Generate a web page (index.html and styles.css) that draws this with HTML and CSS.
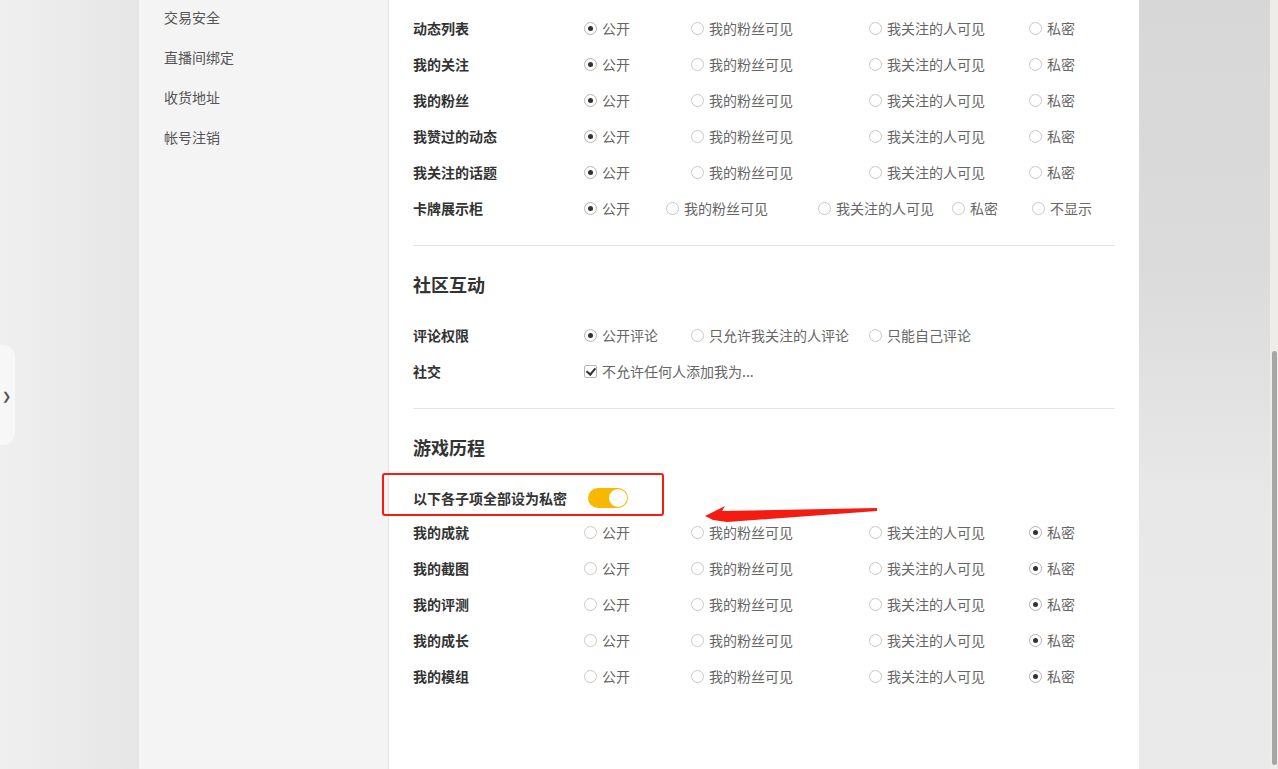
FILE: index.html
```html
<!DOCTYPE html>
<html lang="zh-CN">
<head>
    <meta charset="UTF-8">
    <meta name="viewport" content="width=device-width, initial-scale=1.0">
    <title>隐私设置</title>
    <link rel="stylesheet" href="styles.css">
</head>
<body>
    <div class="page">
        <div class="gutter-left"></div>

        <aside class="sidebar">
            <ul class="nav-list">
                <li class="nav-item">交易安全</li>
                <li class="nav-item">直播间绑定</li>
                <li class="nav-item">收货地址</li>
                <li class="nav-item">帐号注销</li>
            </ul>
        </aside>

        <main class="panel">
            <!-- 个人主页 -->
            <section class="group">
                <div class="row">
                    <div class="row-label">动态列表</div>
                    <div class="options opts-std">
                        <span class="opt"><i class="radio checked"></i>公开</span>
                        <span class="opt"><i class="radio"></i>我的粉丝可见</span>
                        <span class="opt"><i class="radio"></i>我关注的人可见</span>
                        <span class="opt"><i class="radio"></i>私密</span>
                    </div>
                </div>
                <div class="row">
                    <div class="row-label">我的关注</div>
                    <div class="options opts-std">
                        <span class="opt"><i class="radio checked"></i>公开</span>
                        <span class="opt"><i class="radio"></i>我的粉丝可见</span>
                        <span class="opt"><i class="radio"></i>我关注的人可见</span>
                        <span class="opt"><i class="radio"></i>私密</span>
                    </div>
                </div>
                <div class="row">
                    <div class="row-label">我的粉丝</div>
                    <div class="options opts-std">
                        <span class="opt"><i class="radio checked"></i>公开</span>
                        <span class="opt"><i class="radio"></i>我的粉丝可见</span>
                        <span class="opt"><i class="radio"></i>我关注的人可见</span>
                        <span class="opt"><i class="radio"></i>私密</span>
                    </div>
                </div>
                <div class="row">
                    <div class="row-label">我赞过的动态</div>
                    <div class="options opts-std">
                        <span class="opt"><i class="radio checked"></i>公开</span>
                        <span class="opt"><i class="radio"></i>我的粉丝可见</span>
                        <span class="opt"><i class="radio"></i>我关注的人可见</span>
                        <span class="opt"><i class="radio"></i>私密</span>
                    </div>
                </div>
                <div class="row">
                    <div class="row-label">我关注的话题</div>
                    <div class="options opts-std">
                        <span class="opt"><i class="radio checked"></i>公开</span>
                        <span class="opt"><i class="radio"></i>我的粉丝可见</span>
                        <span class="opt"><i class="radio"></i>我关注的人可见</span>
                        <span class="opt"><i class="radio"></i>私密</span>
                    </div>
                </div>
                <div class="row">
                    <div class="row-label">卡牌展示柜</div>
                    <div class="options opts-card">
                        <span class="opt"><i class="radio checked"></i>公开</span>
                        <span class="opt"><i class="radio"></i>我的粉丝可见</span>
                        <span class="opt"><i class="radio"></i>我关注的人可见</span>
                        <span class="opt"><i class="radio"></i>私密</span>
                        <span class="opt"><i class="radio"></i>不显示</span>
                    </div>
                </div>
            </section>

            <section class="group">
                <h2 class="group-title">社区互动</h2>
                <div class="row">
                    <div class="row-label">评论权限</div>
                    <div class="options opts-std">
                        <span class="opt"><i class="radio checked"></i>公开评论</span>
                        <span class="opt"><i class="radio"></i>只允许我关注的人评论</span>
                        <span class="opt"><i class="radio"></i>只能自己评论</span>
                    </div>
                </div>
                <div class="row">
                    <div class="row-label">社交</div>
                    <div class="options">
                        <span class="opt"><i class="checkbox checked"></i>不允许任何人添加我为...</span>
                    </div>
                </div>
            </section>

            <section class="group group-last">
                <h2 class="group-title">游戏历程</h2>
                <div class="row row-toggle">
                    <div class="toggle-label">以下各子项全部设为私密</div>
                    <span class="switch on"><i class="switch-knob"></i></span>
                    <span class="mark-box"></span>
                    <svg class="mark-arrow" width="180" height="24" viewBox="0 0 180 24">
                        <polygon points="1,11 21,1 18,6 173,3 173,6 23,17 9,15" fill="#f41c12"/>
                    </svg>
                </div>
                <div class="row">
                    <div class="row-label">我的成就</div>
                    <div class="options opts-std">
                        <span class="opt"><i class="radio"></i>公开</span>
                        <span class="opt"><i class="radio"></i>我的粉丝可见</span>
                        <span class="opt"><i class="radio"></i>我关注的人可见</span>
                        <span class="opt"><i class="radio checked"></i>私密</span>
                    </div>
                </div>
                <div class="row">
                    <div class="row-label">我的截图</div>
                    <div class="options opts-std">
                        <span class="opt"><i class="radio"></i>公开</span>
                        <span class="opt"><i class="radio"></i>我的粉丝可见</span>
                        <span class="opt"><i class="radio"></i>我关注的人可见</span>
                        <span class="opt"><i class="radio checked"></i>私密</span>
                    </div>
                </div>
                <div class="row">
                    <div class="row-label">我的评测</div>
                    <div class="options opts-std">
                        <span class="opt"><i class="radio"></i>公开</span>
                        <span class="opt"><i class="radio"></i>我的粉丝可见</span>
                        <span class="opt"><i class="radio"></i>我关注的人可见</span>
                        <span class="opt"><i class="radio checked"></i>私密</span>
                    </div>
                </div>
                <div class="row">
                    <div class="row-label">我的成长</div>
                    <div class="options opts-std">
                        <span class="opt"><i class="radio"></i>公开</span>
                        <span class="opt"><i class="radio"></i>我的粉丝可见</span>
                        <span class="opt"><i class="radio"></i>我关注的人可见</span>
                        <span class="opt"><i class="radio checked"></i>私密</span>
                    </div>
                </div>
                <div class="row">
                    <div class="row-label">我的模组</div>
                    <div class="options opts-std">
                        <span class="opt"><i class="radio"></i>公开</span>
                        <span class="opt"><i class="radio"></i>我的粉丝可见</span>
                        <span class="opt"><i class="radio"></i>我关注的人可见</span>
                        <span class="opt"><i class="radio checked"></i>私密</span>
                    </div>
                </div>
            </section>
        </main>

        <div class="gutter-right"></div>

        <div class="scrollbar"><div class="scroll-thumb"></div></div>
    </div>

    <div class="side-tab">&#x276F;</div>
</body>
</html>
```

FILE: styles.css
```css
* {
    box-sizing: border-box;
}

body {
    margin: 0;
    height: 769px;
    overflow: hidden;
    font-family: "Noto Sans CJK SC", "Microsoft YaHei", sans-serif;
    font-size: 14px;
    color: #333;
    background: #ececec;
}

.page {
    display: flex;
    height: 769px;
}

.gutter-left {
    width: 139px;
    background: linear-gradient(to right, #efefef, #e6e6e6);
}

.sidebar {
    width: 250px;
    background-color: #f4f4f4;
    border-right: 1px solid #e4e4e4;
}

.nav-list {
    list-style: none;
    margin: -3px 0 0 0;
    padding: 0 0 0 25px;
}

.nav-item {
    height: 40px;
    line-height: 40px;
    color: #555;
}

.panel {
    width: 750px;
    background-color: #fff;
    padding: 10px 24px 0 24px;
}

.group {
    border-bottom: 1px solid #e6e6e6;
    padding-bottom: 19px;
}

.group-last {
    border-bottom: none;
}

.group-title {
    margin: 26px 0 21px 0;
    font-size: 18px;
    line-height: 24px;
    font-weight: 700;
    color: #333;
}

.row {
    display: flex;
    align-items: center;
    height: 36px;
}

.row-label {
    width: 171px;
    flex-shrink: 0;
    font-weight: 700;
    color: #333;
}

.options {
    display: grid;
    align-items: center;
}

.opts-std {
    grid-template-columns: 107px 178px 160px auto;
}

.opts-card {
    grid-template-columns: 82px 152px 134px 80px auto;
}

.opt {
    display: flex;
    align-items: center;
    color: #666;
    white-space: nowrap;
}

.radio {
    position: relative;
    width: 13px;
    height: 13px;
    margin-right: 5px;
    border: 1px solid #c8c8c8;
    border-radius: 50%;
    background: #fff;
}

.radio.checked {
    border-color: #b4b4b4;
}

.radio.checked::after {
    content: "";
    position: absolute;
    left: 3px;
    top: 3px;
    width: 5px;
    height: 5px;
    border-radius: 50%;
    background: #333;
}

.checkbox {
    position: relative;
    width: 13px;
    height: 13px;
    margin-right: 5px;
    border: 1px solid #b4b4b4;
    border-radius: 2px;
    background: #fff;
}

.checkbox.checked::after {
    content: "";
    position: absolute;
    left: 3px;
    top: 0px;
    width: 4px;
    height: 7px;
    border-right: 2px solid #333;
    border-bottom: 2px solid #333;
    transform: rotate(40deg);
}

.row-toggle {
    position: relative;
    height: 33px;
    margin-top: 22px;
}

.toggle-label {
    font-weight: 700;
    color: #333;
    margin-right: 21px;
}

.switch {
    position: relative;
    width: 40px;
    height: 20px;
    border-radius: 10px;
    background-color: #f9b800;
}

.switch-knob {
    position: absolute;
    top: 1px;
    right: 1px;
    width: 18px;
    height: 18px;
    border-radius: 50%;
    background: #fff;
}

/* annotation overlays */
.mark-box {
    position: absolute;
    left: -31px;
    top: -8px;
    width: 282px;
    height: 43px;
    border: 2px solid #f51c14;
    border-radius: 3px;
}

.mark-arrow {
    position: absolute;
    left: 291px;
    top: 24px;
}

.gutter-right {
    width: 131px;
    background: linear-gradient(to bottom, #d8d7d7 0%, #dcdbdb 35%, #e9e8e9 65%, #ebeaeb 100%);
}

.scrollbar {
    position: relative;
    width: 8px;
    background-color: #efede9;
}

.scroll-thumb {
    position: absolute;
    left: 2px;
    top: 351px;
    width: 5px;
    height: 414px;
    border-radius: 3px;
    background-color: #a6a6a6;
}

.side-tab {
    position: absolute;
    left: 0;
    top: 345px;
    width: 15px;
    height: 100px;
    border-radius: 0 12px 12px 0;
    background-color: #f7f7f7;
    color: #555;
    font-size: 11px;
    line-height: 100px;
    text-align: left;
    padding-left: 2px;
}
```
